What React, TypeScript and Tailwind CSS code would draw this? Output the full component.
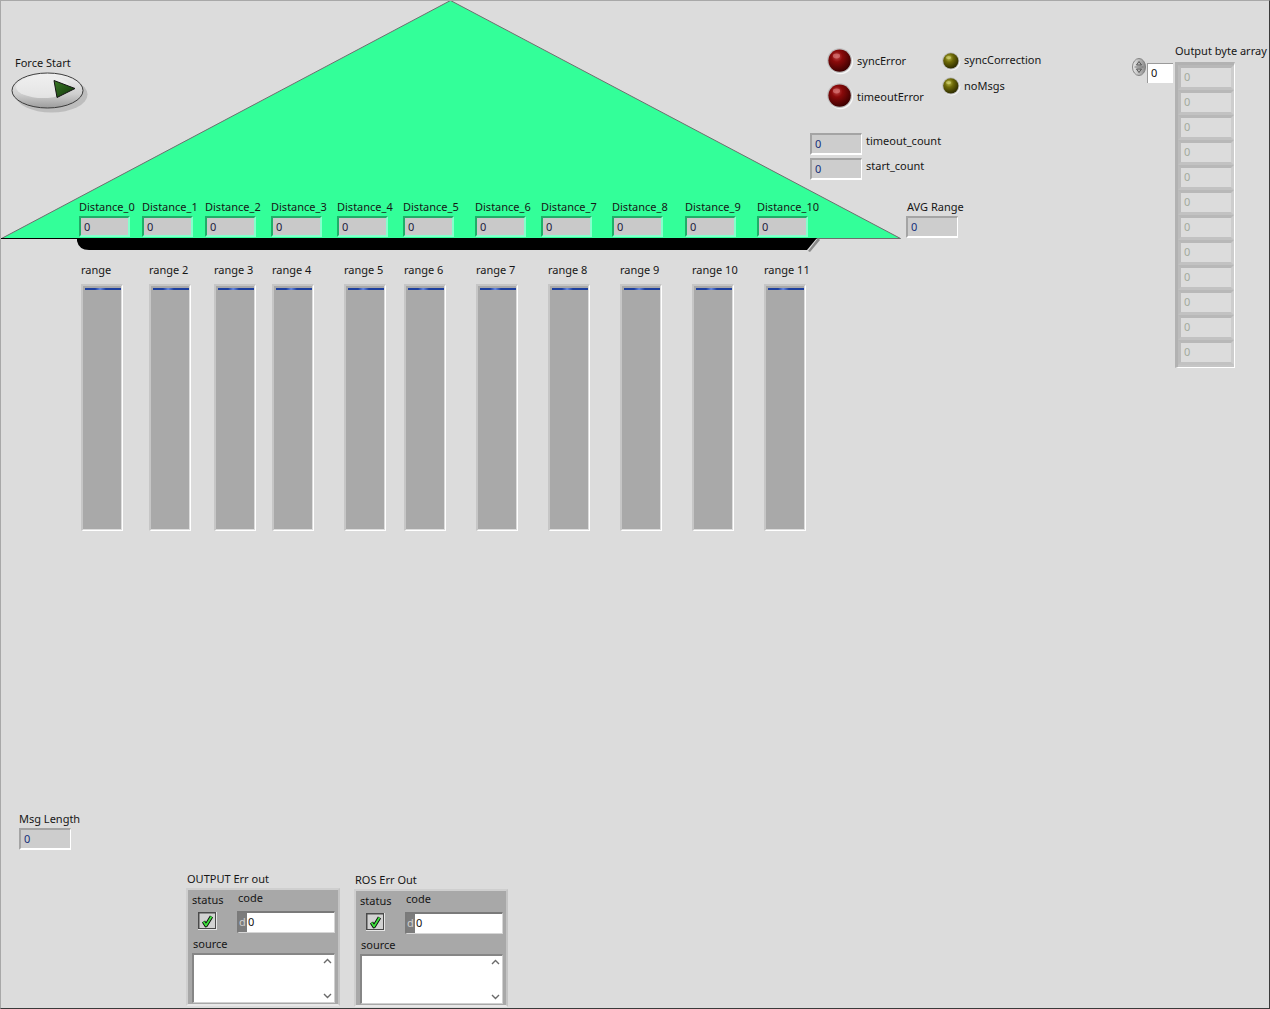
import React from 'react'

const font = "font-['Noto_Sans',sans-serif] text-[11px] leading-[13px]"
const textCls = `whitespace-nowrap text-[#161616] ${font}`

const distanceCount = 11

const ranges = ['range', 'range 2', 'range 3', 'range 4', 'range 5', 'range 6', 'range 7', 'range 8', 'range 9', 'range 10', 'range 11']

const bytes = Array.from({ length: 12 }, (_, i) => i)

function NumBox({ className = '' }: { className?: string }) {
  return (
    <div
      className={`h-[22px] w-[52px] shrink-0 border-t-2 border-l-2 border-r border-b-2 border-t-[#a4a4a4] border-l-[#a4a4a4] border-r-white border-b-white bg-[#cdcdcd] pl-[3px] text-[#14307a] ${font} leading-[18px] ${className}`}
    >
      0
    </div>
  )
}

function RedLed() {
  return (
    <svg className="shrink-0" width="28" height="28" viewBox="0 0 28 28">
      <defs>
        <radialGradient id="ledRed" cx="0.38" cy="0.32" r="0.7">
          <stop offset="0" stopColor="#c24848" />
          <stop offset="0.35" stopColor="#8a0a0a" />
          <stop offset="1" stopColor="#3c0000" />
        </radialGradient>
      </defs>
      <circle cx="14.6" cy="14.6" r="12.6" fill="#f6f6f6" />
      <circle cx="13.6" cy="13.6" r="12.4" fill="#bdbdbd" />
      <circle cx="13.6" cy="13.6" r="11.2" fill="url(#ledRed)" />
      <ellipse cx="10.5" cy="9" rx="3.6" ry="2.4" fill="#e38a8a" opacity="0.55" />
    </svg>
  )
}

function OliveLed() {
  return (
    <svg className="shrink-0" width="20" height="20" viewBox="0 0 20 20">
      <defs>
        <radialGradient id="ledOlive" cx="0.38" cy="0.32" r="0.7">
          <stop offset="0" stopColor="#b8b848" />
          <stop offset="0.4" stopColor="#6e6a08" />
          <stop offset="1" stopColor="#2e2c00" />
        </radialGradient>
      </defs>
      <circle cx="10.6" cy="10.6" r="8.8" fill="#f6f6f6" />
      <circle cx="9.8" cy="9.8" r="8.6" fill="#bdbdbd" />
      <circle cx="9.8" cy="9.8" r="7.6" fill="url(#ledOlive)" />
      <ellipse cx="7.6" cy="6.6" rx="2.6" ry="1.6" fill="#e0e08a" opacity="0.5" />
    </svg>
  )
}

function ErrCluster({ label, className = '' }: { label: string; className?: string }) {
  return (
    <div className={`flex flex-col ${className}`}>
      <div className={`pl-px ${textCls}`}>{label}</div>
      <div className="mt-[3px] flex h-[118px] w-[154px] flex-col border-2 border-t-[#cfcfcf] border-l-[#cfcfcf] border-r-[#c4c4c4] border-b-[#e8e8e8] bg-[#a8a8a8] pl-[4px] pt-px">
        <div className="flex">
          <div className="flex w-[45px] flex-col">
            <div className={`mt-[2px] ${textCls}`}>status</div>
            <svg className="ml-[6px] mt-[6px]" width="19" height="18" viewBox="0 0 19 18">
              <rect x="0" y="0" width="19" height="18" fill="#e6e6e6" />
              <rect x="0" y="0" width="18" height="17" fill="#4a4a4a" />
              <rect x="1.5" y="1.5" width="15.5" height="14.5" fill="#d2d2d2" />
              <path d="M5.5 9.5 L8 13.5 L13.5 4.5" stroke="#0a0a0a" strokeWidth="3.6" fill="none" strokeLinejoin="round" />
              <path d="M5.5 9.5 L8 13.5 L13.5 4.5" stroke="#3ee03e" strokeWidth="1.8" fill="none" strokeLinejoin="round" />
            </svg>
          </div>
          <div className="flex flex-col">
            <div className={`ml-px ${textCls}`}>code</div>
            <div className="mt-[7px] flex h-[22px] w-[98px] border-t-2 border-l-2 border-r border-b border-t-[#7a7a7a] border-l-[#7a7a7a] border-r-[#d6d6d6] border-b-[#d6d6d6]">
              <div className={`w-[8px] bg-[#7c7c7c] text-[#cfcfcf] ${font} leading-[18px]`}>d</div>
              <div className={`flex-1 bg-white pl-px text-[#111] ${font} leading-[18px]`}>0</div>
            </div>
          </div>
        </div>
        <div className={`ml-px mt-[4px] ${textCls}`}>source</div>
        <div className="mt-[3px] flex h-[50px] w-[143px] border-t-2 border-l-2 border-r border-b border-t-[#868686] border-l-[#868686] border-r-[#d0d0d0] border-b-[#d0d0d0] bg-white">
          <div className="flex-1" />
          <div className="flex w-[14px] flex-col items-center justify-between py-[3px]">
            <svg width="9" height="6" viewBox="0 0 9 6">
              <path d="M1 5 L4.5 1.5 L8 5" stroke="#6a6a6a" strokeWidth="1.4" fill="none" />
            </svg>
            <svg width="9" height="6" viewBox="0 0 9 6">
              <path d="M1 1 L4.5 4.5 L8 1" stroke="#6a6a6a" strokeWidth="1.4" fill="none" />
            </svg>
          </div>
        </div>
      </div>
    </div>
  )
}

export default function App() {
  return (
    <div className="relative h-[1009px] w-[1270px] overflow-hidden bg-[#dcdcdc]">
      {/* roof drawing */}
      <svg className="absolute left-0 top-0" width="904" height="254" viewBox="0 0 904 254">
        <polygon points="1.5,238.5 450.5,0.5 900.5,238.5" fill="#33ff99" stroke="#6e6e6e" strokeWidth="1" />
        <line x1="0" y1="238.5" x2="80" y2="238.5" stroke="#000" strokeWidth="1" />
        <path d="M818 238 L820 240 L810 252 L808 251 Z" fill="#8a8a8a" />
        <path d="M77 238 L817 238 L807 250 L89 250 Q79 250 77 241 Z" fill="#000" />
      </svg>

      {/* Force Start */}
      <div className="absolute left-[10px] top-[56px] flex flex-col">
        <div className={`ml-[5px] ${textCls}`}>Force Start</div>
        <svg className="mt-px" width="82" height="46" viewBox="0 0 82 46">
          <defs>
            <linearGradient id="fsBody" x1="0" y1="0" x2="0" y2="1">
              <stop offset="0" stopColor="#f2f2f2" />
              <stop offset="0.6" stopColor="#cfcfcf" />
              <stop offset="1" stopColor="#9c9c9c" />
            </linearGradient>
            <linearGradient id="fsGreen" x1="0" y1="0" x2="1" y2="1">
              <stop offset="0" stopColor="#3a7a26" />
              <stop offset="1" stopColor="#0f3208" />
            </linearGradient>
          </defs>
          <ellipse cx="41.5" cy="24.5" rx="36" ry="18" fill="#a8a8a8" opacity="0.6" />
          <ellipse cx="37.5" cy="20.5" rx="35.5" ry="17.5" fill="url(#fsBody)" stroke="#3c3c3c" strokeWidth="1" />
          <ellipse cx="33" cy="17" rx="27" ry="11" fill="#efefef" opacity="0.7" />
          <path d="M44 10.5 L65 18.5 L47 27.5 Z" fill="url(#fsGreen)" stroke="#141414" strokeWidth="1" />
        </svg>
      </div>

      {/* LEDs */}
      <div className="absolute left-[826px] top-[47px] flex gap-[2px]">
        <div className="flex w-[113px] flex-col gap-[7px]">
          <div className="flex items-start gap-[3px]">
            <RedLed />
            <div className={`mt-[7px] ${textCls}`}>syncError</div>
          </div>
          <div className="flex items-start gap-[3px]">
            <RedLed />
            <div className={`mt-[8px] ${textCls}`}>timeoutError</div>
          </div>
        </div>
        <div className="mt-[4px] flex flex-col gap-[5px]">
          <div className="flex items-start gap-[3px]">
            <OliveLed />
            <div className={`mt-[2px] ${textCls}`}>syncCorrection</div>
          </div>
          <div className="flex items-start gap-[3px]">
            <OliveLed />
            <div className={`mt-[3px] ${textCls}`}>noMsgs</div>
          </div>
        </div>
      </div>

      {/* counters */}
      <div className="absolute left-[810px] top-[133px] flex flex-col gap-[3px]">
        <div className="flex items-start gap-[4px]">
          <NumBox />
          <div className={`mt-px ${textCls}`}>timeout_count</div>
        </div>
        <div className="flex items-start gap-[4px]">
          <NumBox />
          <div className={`mt-px ${textCls}`}>start_count</div>
        </div>
      </div>

      {/* distances */}
      <div className="absolute left-[79px] top-[200px] grid grid-cols-[63px_63px_66px_66px_66px_72px_66px_71px_73px_72px_62px]">
        {Array.from({ length: distanceCount }, (_, i) => (
          <div key={i} className="flex flex-col">
            <div className={textCls}>Distance_{i}</div>
            <div
              className={`mt-[3px] h-[21px] w-[51px] border-2 border-t-[#1fae68] border-l-[#1fae68] border-r-[#86ffcc] border-b-[#86ffcc] bg-[#c9c9c9] pl-[3px] text-[#1c1c3c] ${font} leading-[17px]`}
            >
              0
            </div>
          </div>
        ))}
      </div>

      <div className="absolute left-[906px] top-[200px] flex flex-col">
        <div className={`ml-px ${textCls}`}>AVG Range</div>
        <NumBox className="mt-[3px]" />
      </div>

      {/* range bars */}
      <div className="absolute left-[81px] top-[263px] grid grid-cols-[68px_65px_58px_72px_60px_72px_72px_72px_72px_72px_45px]">
        {ranges.map((label) => (
          <div key={label} className="flex flex-col">
            <div className={textCls}>{label}</div>
            <div className="mt-[8px] h-[247px] w-[42px] border-t-2 border-l-2 border-r border-b border-t-[#c6c6c6] border-l-[#c6c6c6] border-r-white border-b-white bg-[#dcdcdc] pr-px pb-px">
              <div className="h-full bg-[#a9a9a9] pl-[2px] pt-[2px]">
                <div className="h-[2px] bg-[linear-gradient(90deg,#1d3f9e_0%,#1d3f9e_28%,#6a8ae0_42%,#1d3f9e_58%,#1d3f9e_100%)]" />
              </div>
            </div>
          </div>
        ))}
      </div>

      {/* Output byte array */}
      <div className="absolute left-[1132px] top-[44px] flex flex-col">
        <div className={`ml-[43px] ${textCls}`}>Output byte array</div>
        <div className="flex items-start">
          <svg className="mt-px" width="15" height="18" viewBox="0 0 15 18">
            <defs>
              <linearGradient id="spin" x1="0" y1="0" x2="1" y2="0">
                <stop offset="0" stopColor="#ececec" />
                <stop offset="1" stopColor="#8a8a8a" />
              </linearGradient>
            </defs>
            <ellipse cx="7" cy="9" rx="6.5" ry="8.5" fill="url(#spin)" stroke="#7a7a7a" strokeWidth="0.9" />
            <path d="M4.5 7 L7 3.5 L9.5 7 Z" fill="none" stroke="#4a4a4a" strokeWidth="0.9" />
            <path d="M4.5 11 L7 14.5 L9.5 11 Z" fill="none" stroke="#4a4a4a" strokeWidth="0.9" />
            <line x1="2.5" y1="9" x2="11.5" y2="9" stroke="#6a6a6a" strokeWidth="0.8" />
          </svg>
          <div className={`mt-[6px] h-[20px] w-[26px] border-t border-l border-[#9a9a9a] bg-white pl-[3px] text-[#111] ${font} leading-[18px]`}>
            0
          </div>
          <div className="ml-[2px] mt-[5px] flex w-[60px] flex-col border-t-[3px] border-l-[3px] border-r border-b border-t-[#b2b2b2] border-l-[#b2b2b2] border-r-white border-b-white bg-[#c6c6c6] pb-[2px]">
            {bytes.map((b) => (
              <div
                key={b}
                className={`h-[25px] border-[3px] border-t-[#b8b8b8] border-l-[#bcbcbc] border-r-[#cdcdcd] border-b-[#c2c2c2] bg-[#dcdcdc] pl-[3px] text-[#a3aa9c] ${font} leading-[18px]`}
              >
                0
              </div>
            ))}
          </div>
        </div>
      </div>

      {/* Msg Length */}
      <div className="absolute left-[19px] top-[812px] flex flex-col">
        <div className={textCls}>Msg Length</div>
        <NumBox className="mt-[3px]" />
      </div>

      {/* error clusters */}
      <div className="absolute left-[186px] top-[872px] flex items-start gap-[14px]">
        <ErrCluster label="OUTPUT Err out" />
        <ErrCluster label="ROS Err Out" className="mt-px" />
      </div>

      {/* panel frame */}
      <div className="pointer-events-none absolute inset-0 border border-t-[#a8a8a8] border-l-[#a8a8a8] border-r-[#3a3a3a] border-b-[#3a3a3a]" />
    </div>
  )
}
